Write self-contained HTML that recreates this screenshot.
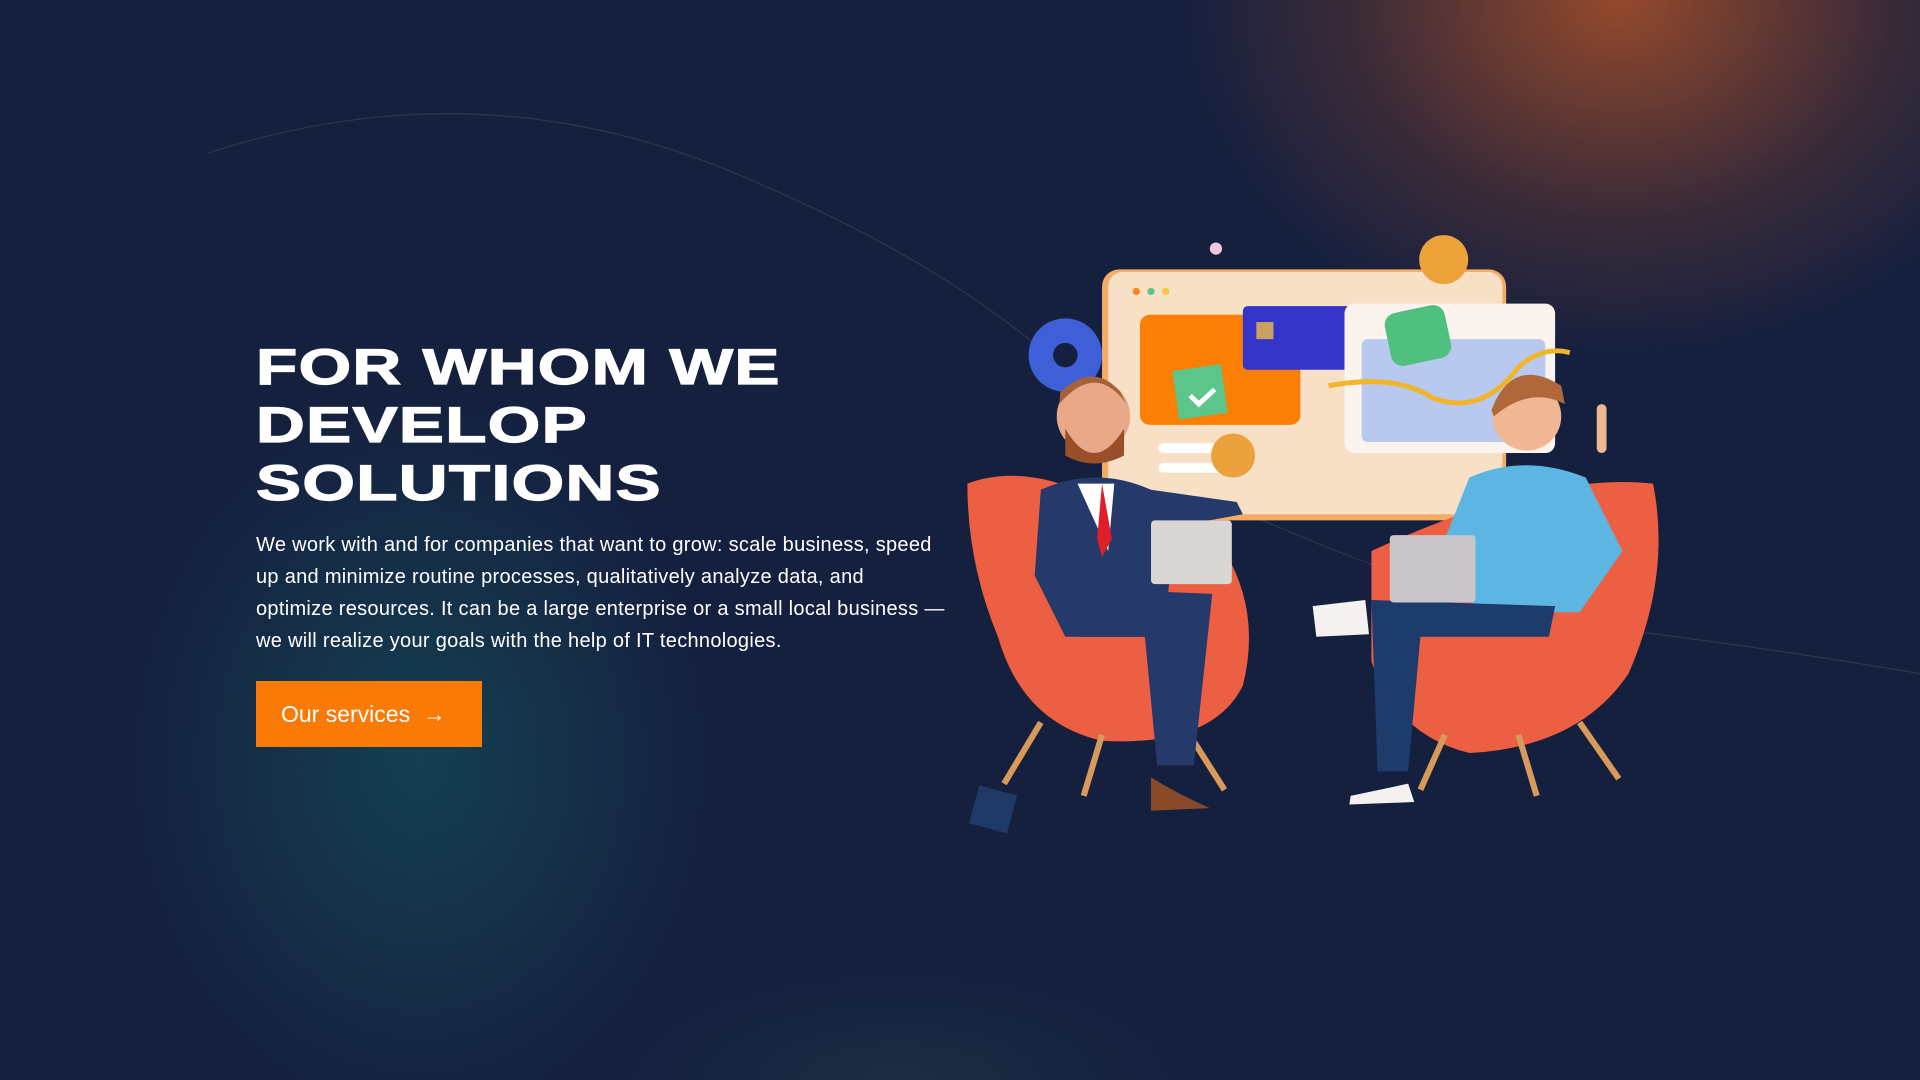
<!DOCTYPE html>
<html><head><meta charset="utf-8"><style>
html,body{margin:0;padding:0;width:1920px;height:1080px;overflow:hidden;background:#15203f;font-family:"Liberation Sans",sans-serif}
.bg{position:absolute;inset:0;background:
radial-gradient(ellipse 420px 520px at 420px 760px,rgba(20,90,95,.55),rgba(20,80,90,0) 70%),
radial-gradient(ellipse 520px 420px at 1620px 0px,rgba(170,80,40,.85),rgba(120,60,45,.4) 50%,rgba(21,32,63,0) 85%),
radial-gradient(ellipse 420px 160px at 900px 1080px,rgba(40,70,70,.35),rgba(0,0,0,0) 70%),#15203f}
svg{position:absolute;left:0;top:0}
h1{position:absolute;left:256px;top:338px;margin:0;color:#fff;font-weight:900;font-size:50px;line-height:58px;letter-spacing:1px;transform:scaleX(1.35);transform-origin:left top;white-space:nowrap;-webkit-text-stroke:1.2px #fff}
p{position:absolute;left:256px;top:529px;margin:0;width:690px;color:#fff;font-size:20px;line-height:32px;letter-spacing:.3px}
.btn{position:absolute;left:256px;top:681px;width:226px;height:66px;background:#f97a06;color:#fff;font-size:23px;line-height:66px;box-sizing:border-box;padding-left:25px}
</style></head><body>
<div class="bg"></div>
<svg width="1920" height="1080" viewBox="0 0 1568 882">
<path d="M170 125 Q400 50 620 150 Q760 210 850 285" stroke="rgba(255,255,255,.1)" fill="none"/>
<path d="M1020 420 Q1200 500 1330 515 Q1450 530 1568 550" stroke="rgba(255,255,255,.1)" fill="none"/>
<rect x="900" y="220" width="330" height="205" rx="14" fill="#f3ac66"/>
<rect x="905" y="222" width="322" height="198" rx="12" fill="#f7e0c6"/>
<circle cx="928" cy="238" r="3" fill="#f08a1c"/><circle cx="940" cy="238" r="3" fill="#5dc48a"/><circle cx="952" cy="238" r="3" fill="#f5c84a"/>
<rect x="931" y="257" width="131" height="90" rx="8" fill="#fb7e05"/>
<rect x="1015" y="250" width="95" height="52" rx="4" fill="#3434c9"/>
<rect x="1026" y="263" width="14" height="14" fill="#c8a060"/>
<rect x="1098" y="248" width="172" height="122" rx="8" fill="#fbf3ee"/>
<rect x="1112" y="277" width="150" height="84" rx="5" fill="#b9c8ef"/>
<path d="M1085 315 Q1140 305 1170 325 Q1210 340 1240 300 Q1260 282 1282 288" stroke="#f0b52a" stroke-width="4" fill="none"/>
<rect x="1133" y="252" width="50" height="44" rx="10" fill="#4fc07d" transform="rotate(-12 1158 274)"/>
<path d="M960 300 h40 v40 h-40z" fill="#5cc58a" transform="rotate(-8 980 320)"/>
<path d="M972 323 l7 7 l13 -12" stroke="#fff" stroke-width="4" fill="none"/>
<rect x="946" y="362" width="70" height="8" rx="4" fill="#fff"/><rect x="946" y="378" width="60" height="8" rx="4" fill="#fff"/>
<circle cx="1179" cy="212" r="20" fill="#eea23a"/><circle cx="1007" cy="372" r="18" fill="#eba23c"/>
<circle cx="993" cy="203" r="5" fill="#f4c6dd"/>
<circle cx="870" cy="290" r="30" fill="#3f5fd8"/><circle cx="870" cy="290" r="10" fill="#15203f"/>
<rect x="795" y="645" width="32" height="32" fill="#1f3a66" transform="rotate(15 811 661)"/>
<path d="M790 395 Q830 380 880 400 L1000 450 Q1030 500 1015 560 Q990 610 900 605 Q835 590 815 520 Q790 460 790 395Z" fill="#ec5f43"/>
<path d="M1120 450 Q1260 385 1350 395 Q1365 470 1330 550 Q1290 610 1200 615 Q1140 600 1120 540Z" fill="#ec5f43"/>
<g stroke="#d89a5a" stroke-width="5"><line x1="850" y1="590" x2="820" y2="640"/><line x1="900" y1="600" x2="885" y2="650"/><line x1="965" y1="590" x2="1000" y2="645"/><line x1="1180" y1="600" x2="1160" y2="645"/><line x1="1240" y1="600" x2="1255" y2="650"/><line x1="1290" y1="590" x2="1322" y2="636"/></g>
<circle cx="893" cy="340" r="30" fill="#e9a888"/><path d="M865 330 Q895 295 920 330 L915 320 Q893 295 866 320Z" fill="#a7613a"/>
<path d="M870 350 Q893 390 918 350 L918 372 Q893 385 870 372Z" fill="#9a4f2a"/>
<path d="M850 400 Q895 380 940 400 L1010 410 L1015 420 L960 430 L950 520 L870 520 L845 470Z" fill="#25396b"/>
<path d="M880 395 L910 395 L905 450Z" fill="#fff"/><path d="M900 395 L908 440 L900 455 L896 440Z" fill="#e01e2a"/>
<path d="M870 480 L990 485 L975 625 L945 625 L935 520 L880 520Z" fill="#25396b"/>
<rect x="940" y="425" width="66" height="52" rx="3" fill="#d9d6d3"/>
<path d="M940 635 Q965 650 988 660 L940 662Z" fill="#8a4a2a"/>
<circle cx="1247" cy="340" r="28" fill="#f0b793"/><path d="M1218 335 Q1235 290 1275 315 L1278 330 Q1250 315 1220 340Z" fill="#b0683a"/>
<path d="M1200 390 Q1245 370 1295 390 L1325 450 L1290 500 L1205 500 L1180 440Z" fill="#5db6e1"/>
<path d="M1120 490 L1270 495 L1265 520 L1160 520 L1150 630 L1125 630Z" fill="#1d3c6b"/>
<rect x="1135" y="437" width="70" height="55" rx="3" fill="#c8c6c8"/>
<path d="M1072 495 L1115 490 L1118 518 L1075 520Z" fill="#f4f2f0"/>
<path d="M1103 650 L1150 640 L1155 655 L1102 657Z" fill="#f4f2f0"/>
<rect x="1304" y="330" width="8" height="40" rx="4" fill="#f0b793"/>
</svg>
<h1>FOR WHOM WE<br>DEVELOP<br>SOLUTIONS</h1>
<p>We work with and for companies that want to grow: scale business, speed up and minimize routine processes, qualitatively analyze data, and optimize resources. It can be a large enterprise or a small local business — we will realize your goals with the help of IT technologies.</p>
<div class="btn">Our services &nbsp;→</div>
</body></html>
